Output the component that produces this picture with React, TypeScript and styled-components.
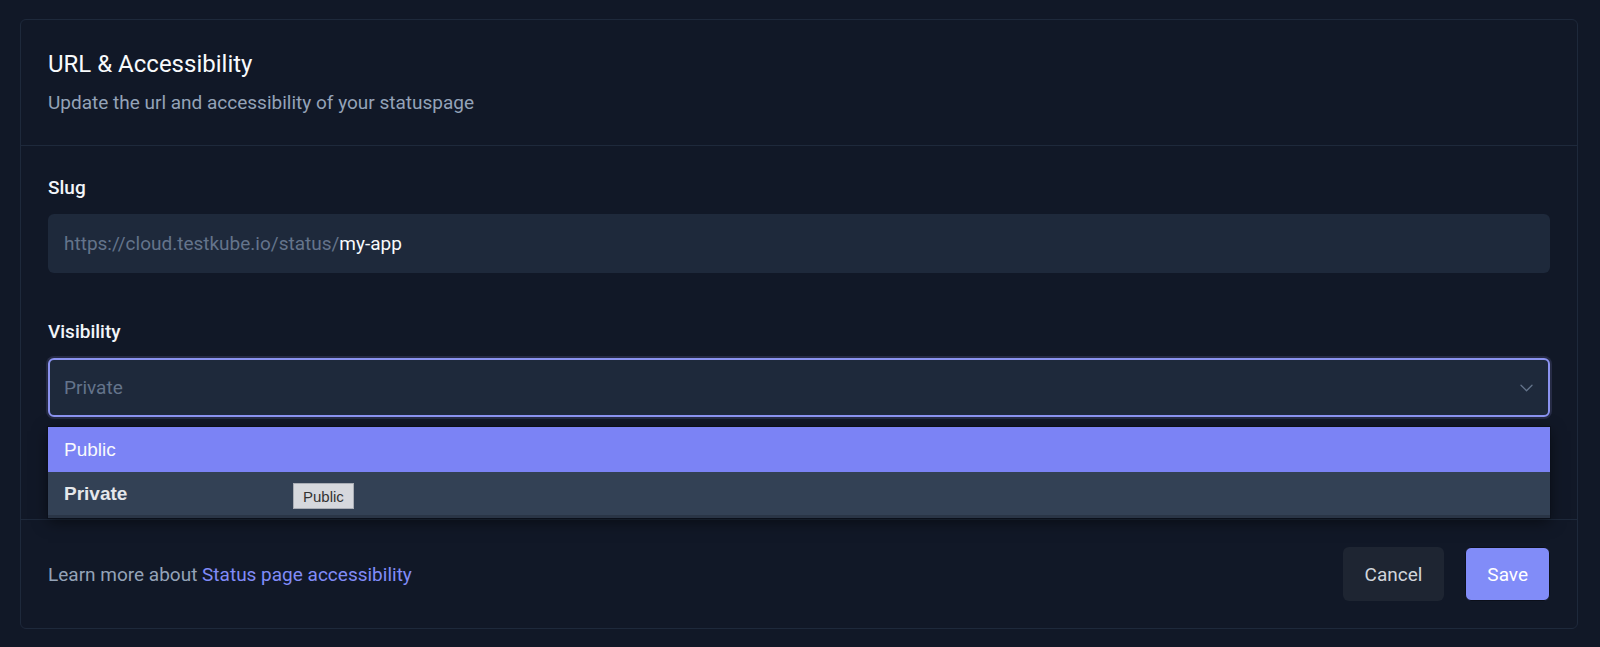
import React from "react";
import styled, { createGlobalStyle } from "styled-components";

const GlobalStyle = createGlobalStyle`
  html, body { margin: 0; padding: 0; background: #111827; }
  body { font-family: Roboto, "Noto Sans", "Liberation Sans", sans-serif; -webkit-font-smoothing: antialiased; }
  * { box-sizing: border-box; }
`;

const Page = styled.div`
  padding: 19px 22px 18px 20px;
  background: #111827;
  min-height: 647px;
`;

const Card = styled.section`
  border: 1px solid #1e293b;
  border-radius: 6px;
  background: #111827;
`;

const Header = styled.header`
  height: 126px;
  padding: 28px 27px 0;
  border-bottom: 1px solid #1e293b;
  display: flex;
  flex-direction: column;
  gap: 9px;
`;

const Title = styled.h2`
  margin: 0;
  font-size: 24px;
  line-height: 32px;
  font-weight: 400;
  color: #f8fafc;
`;

const Subtitle = styled.p`
  margin: 0;
  font-size: 19px;
  line-height: 28px;
  color: #94a3b8;
`;

const Body = styled.div`
  height: 373px;
  padding: 28px 27px 0;
  display: flex;
  flex-direction: column;
  gap: 45px;
`;

const Field = styled.div`
  display: flex;
  flex-direction: column;
  gap: 12px;
`;

const Label = styled.label`
  font-size: 19px;
  line-height: 28px;
  font-weight: 500;
  color: #f1f5f9;
`;

const InputBox = styled.div`
  height: 59px;
  border-radius: 6px;
  background: #1e293b;
  display: flex;
  align-items: center;
  padding: 0 16px;
  font-size: 19px;
`;

const Prefix = styled.span`
  color: #64748b;
`;

const Value = styled.span`
  color: #f8fafc;
`;

const SelectWrap = styled.div`
  position: relative;
`;

const SelectBox = styled.div`
  height: 59px;
  border-radius: 6px;
  background: #1e293b;
  border: 2px solid #8b93f0;
  box-shadow: 0 0 0 2px #262b45;
  display: flex;
  align-items: center;
  justify-content: space-between;
  padding: 0 15px 0 14px;
  font-size: 19px;
  color: #64748b;
`;

const Menu = styled.ul`
  position: absolute;
  left: 0;
  right: 0;
  top: calc(100% + 10px);
  margin: 0;
  padding: 0;
  list-style: none;
  background: #334155;
  box-shadow: 0 0 0 1px #0b101b, 0 4px 14px rgba(0, 0, 0, 0.5);
  border-bottom: 3px solid #2a3546;
  font-family: "Liberation Sans", Arial, sans-serif;
  z-index: 2;
`;

const Option = styled.li<{ $active?: boolean; $selected?: boolean }>`
  height: ${(p) => (p.$active ? 45 : 43)}px;
  display: flex;
  align-items: center;
  padding: 0 16px;
  font-size: 19px;
  background: ${(p) => (p.$active ? "#7b83f5" : "#334155")};
  color: ${(p) => (p.$active ? "#f8fafc" : "#e5e7eb")};
  font-weight: ${(p) => (p.$selected ? 700 : 400)};
  position: relative;
`;

const Tip = styled.span`
  position: absolute;
  left: 245px;
  top: 11px;
  height: 26px;
  padding: 0 9px;
  display: flex;
  align-items: center;
  background: #d6d8dd;
  border: 1px solid #a9adb5;
  color: #333;
  font-family: "Liberation Sans", Arial, sans-serif;
  font-size: 15px;
  font-weight: 400;
`;

const Footer = styled.footer`
  border-top: 1px solid #1e293b;
  padding: 27px 27px 27px;
  display: flex;
  align-items: center;
  justify-content: space-between;
`;

const Help = styled.p`
  margin: 0;
  font-size: 19px;
  color: #94a3b8;
`;

const Link = styled.a`
  color: #818cf8;
  text-decoration: none;
`;

const Actions = styled.div`
  display: flex;
  gap: 21px;
`;

const Button = styled.button<{ $primary?: boolean }>`
  height: 54px;
  padding: 0 ${(p) => (p.$primary ? 21 : 22)}px;
  border-radius: 6px;
  border: ${(p) => (p.$primary ? "1px solid #0b0f1a" : "none")};
  background: ${(p) => (p.$primary ? "#818cf8" : "#1e2532")};
  color: ${(p) => (p.$primary ? "#ffffff" : "#d1d5db")};
  font-family: Roboto, "Liberation Sans", sans-serif;
  font-size: 19px;
  font-weight: 400;
`;

const Chevron = () => (
  <svg width="13" height="8" viewBox="0 0 13 8" fill="none">
    <path d="M1 1.2l5.5 5.5 5.5-5.5" stroke="#64748b" strokeWidth="1.3" strokeLinecap="round" strokeLinejoin="round" />
  </svg>
);

export default function App() {
  return (
    <>
      <GlobalStyle />
      <Page>
        <Card>
          <Header>
            <Title>URL &amp; Accessibility</Title>
            <Subtitle>Update the url and accessibility of your statuspage</Subtitle>
          </Header>
          <Body>
            <Field>
              <Label>Slug</Label>
              <InputBox>
                <Prefix>https://cloud.testkube.io/status/</Prefix>
                <Value>my-app</Value>
              </InputBox>
            </Field>
            <Field>
              <Label>Visibility</Label>
              <SelectWrap>
                <SelectBox>
                  <span>Private</span>
                  <Chevron />
                </SelectBox>
                <Menu>
                  <Option $active>Public</Option>
                  <Option $selected>
                    Private
                    <Tip>Public</Tip>
                  </Option>
                </Menu>
              </SelectWrap>
            </Field>
          </Body>
          <Footer>
            <Help>
              Learn more about <Link href="#">Status page accessibility</Link>
            </Help>
            <Actions>
              <Button>Cancel</Button>
              <Button $primary>Save</Button>
            </Actions>
          </Footer>
        </Card>
      </Page>
    </>
  );
}
